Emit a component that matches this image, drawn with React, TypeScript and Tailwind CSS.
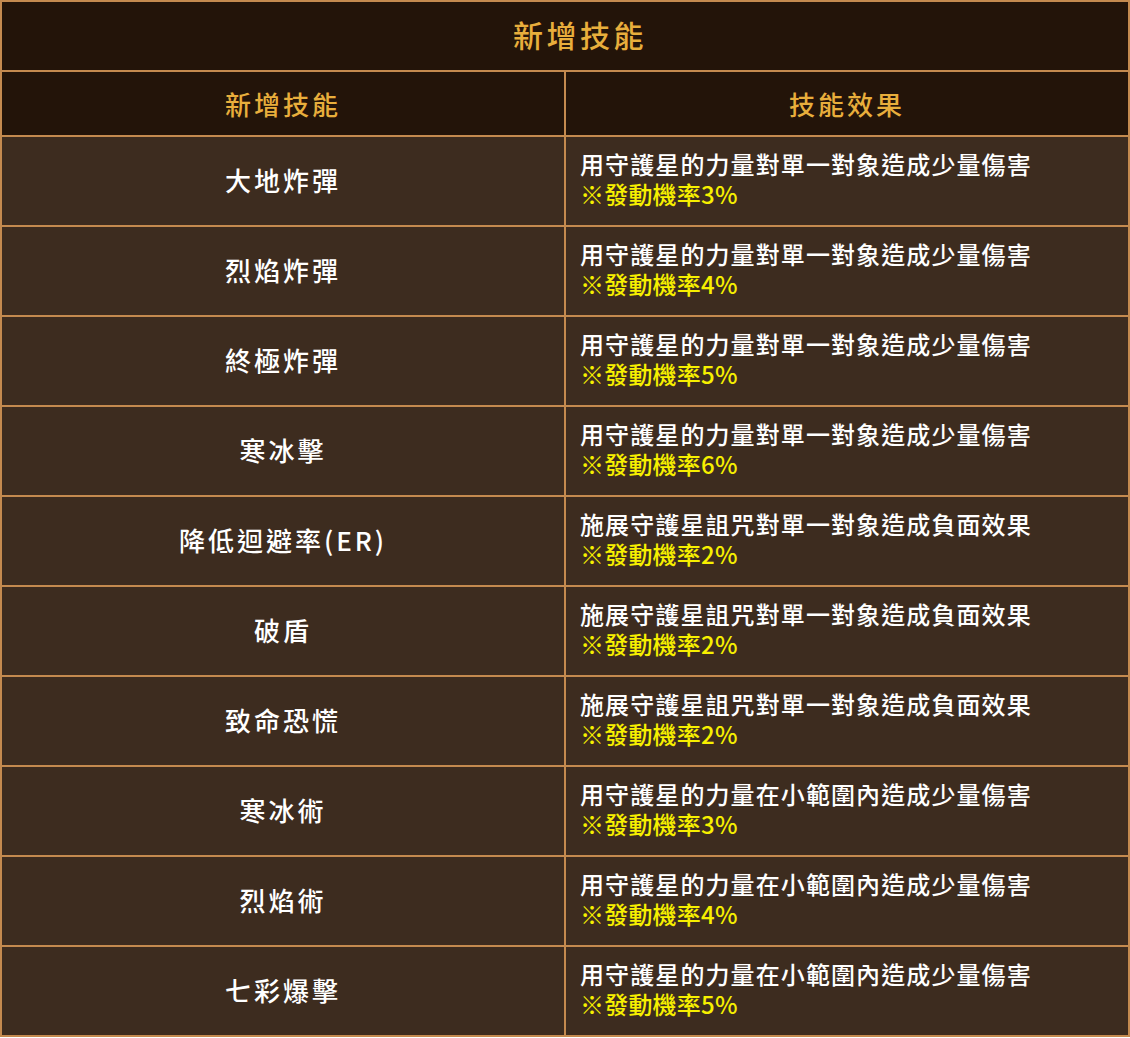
import React from 'react';

interface SkillRow {
  name: string;
  effect: string;
  rate: string;
}

const skills: SkillRow[] = [
  { name: '大地炸彈', effect: '用守護星的力量對單一對象造成少量傷害', rate: '※發動機率3%' },
  { name: '烈焰炸彈', effect: '用守護星的力量對單一對象造成少量傷害', rate: '※發動機率4%' },
  { name: '終極炸彈', effect: '用守護星的力量對單一對象造成少量傷害', rate: '※發動機率5%' },
  { name: '寒冰擊', effect: '用守護星的力量對單一對象造成少量傷害', rate: '※發動機率6%' },
  { name: '降低迴避率(ER)', effect: '施展守護星詛咒對單一對象造成負面效果', rate: '※發動機率2%' },
  { name: '破盾', effect: '施展守護星詛咒對單一對象造成負面效果', rate: '※發動機率2%' },
  { name: '致命恐慌', effect: '施展守護星詛咒對單一對象造成負面效果', rate: '※發動機率2%' },
  { name: '寒冰術', effect: '用守護星的力量在小範圍內造成少量傷害', rate: '※發動機率3%' },
  { name: '烈焰術', effect: '用守護星的力量在小範圍內造成少量傷害', rate: '※發動機率4%' },
  { name: '七彩爆擊', effect: '用守護星的力量在小範圍內造成少量傷害', rate: '※發動機率5%' },
];

const font = { fontFamily: '"Noto Sans CJK TC", "Noto Sans", sans-serif' };

export default function App() {
  return (
    <div className="w-[1130px] bg-[#231409]" style={font}>
      <div className="border-2 border-[#c48a4f]">
        {/* Title */}
        <div className="h-[68px] flex items-center justify-center pl-[30px] pb-1 text-[30px] font-medium tracking-[3.5px] text-[#e8ae3c]">
          新增技能
        </div>

        {/* Column headers */}
        <div className="flex h-[65px] border-t-2 border-[#c48a4f]">
          <div className="w-[562px] flex items-center justify-center text-[26px] font-medium tracking-[3px] text-[#e8ae3c]">
            新增技能
          </div>
          <div className="flex-1 border-l-2 border-[#c48a4f] flex items-center justify-center text-[26px] font-medium tracking-[3px] text-[#e8ae3c]">
            技能效果
          </div>
        </div>

        {/* Skill rows */}
        {skills.map((s, i) => (
          <div key={i} className="flex h-[90px] border-t-2 border-[#c48a4f] bg-[#3d2c1f]">
            <div className="w-[562px] flex items-center justify-center pb-1 text-[26px] font-medium tracking-[3px] text-white">
              {s.name}
            </div>
            <div className="flex-1 border-l-2 border-[#c48a4f] flex items-center pl-[14px] pb-1">
              <p className="text-[24px] font-medium leading-[30px]">
                <span className="text-white tracking-[1.1px]">{s.effect}</span>
                <br />
                <span className="text-[#f7f000] tracking-[0.2px]">{s.rate}</span>
              </p>
            </div>
          </div>
        ))}
      </div>
    </div>
  );
}
